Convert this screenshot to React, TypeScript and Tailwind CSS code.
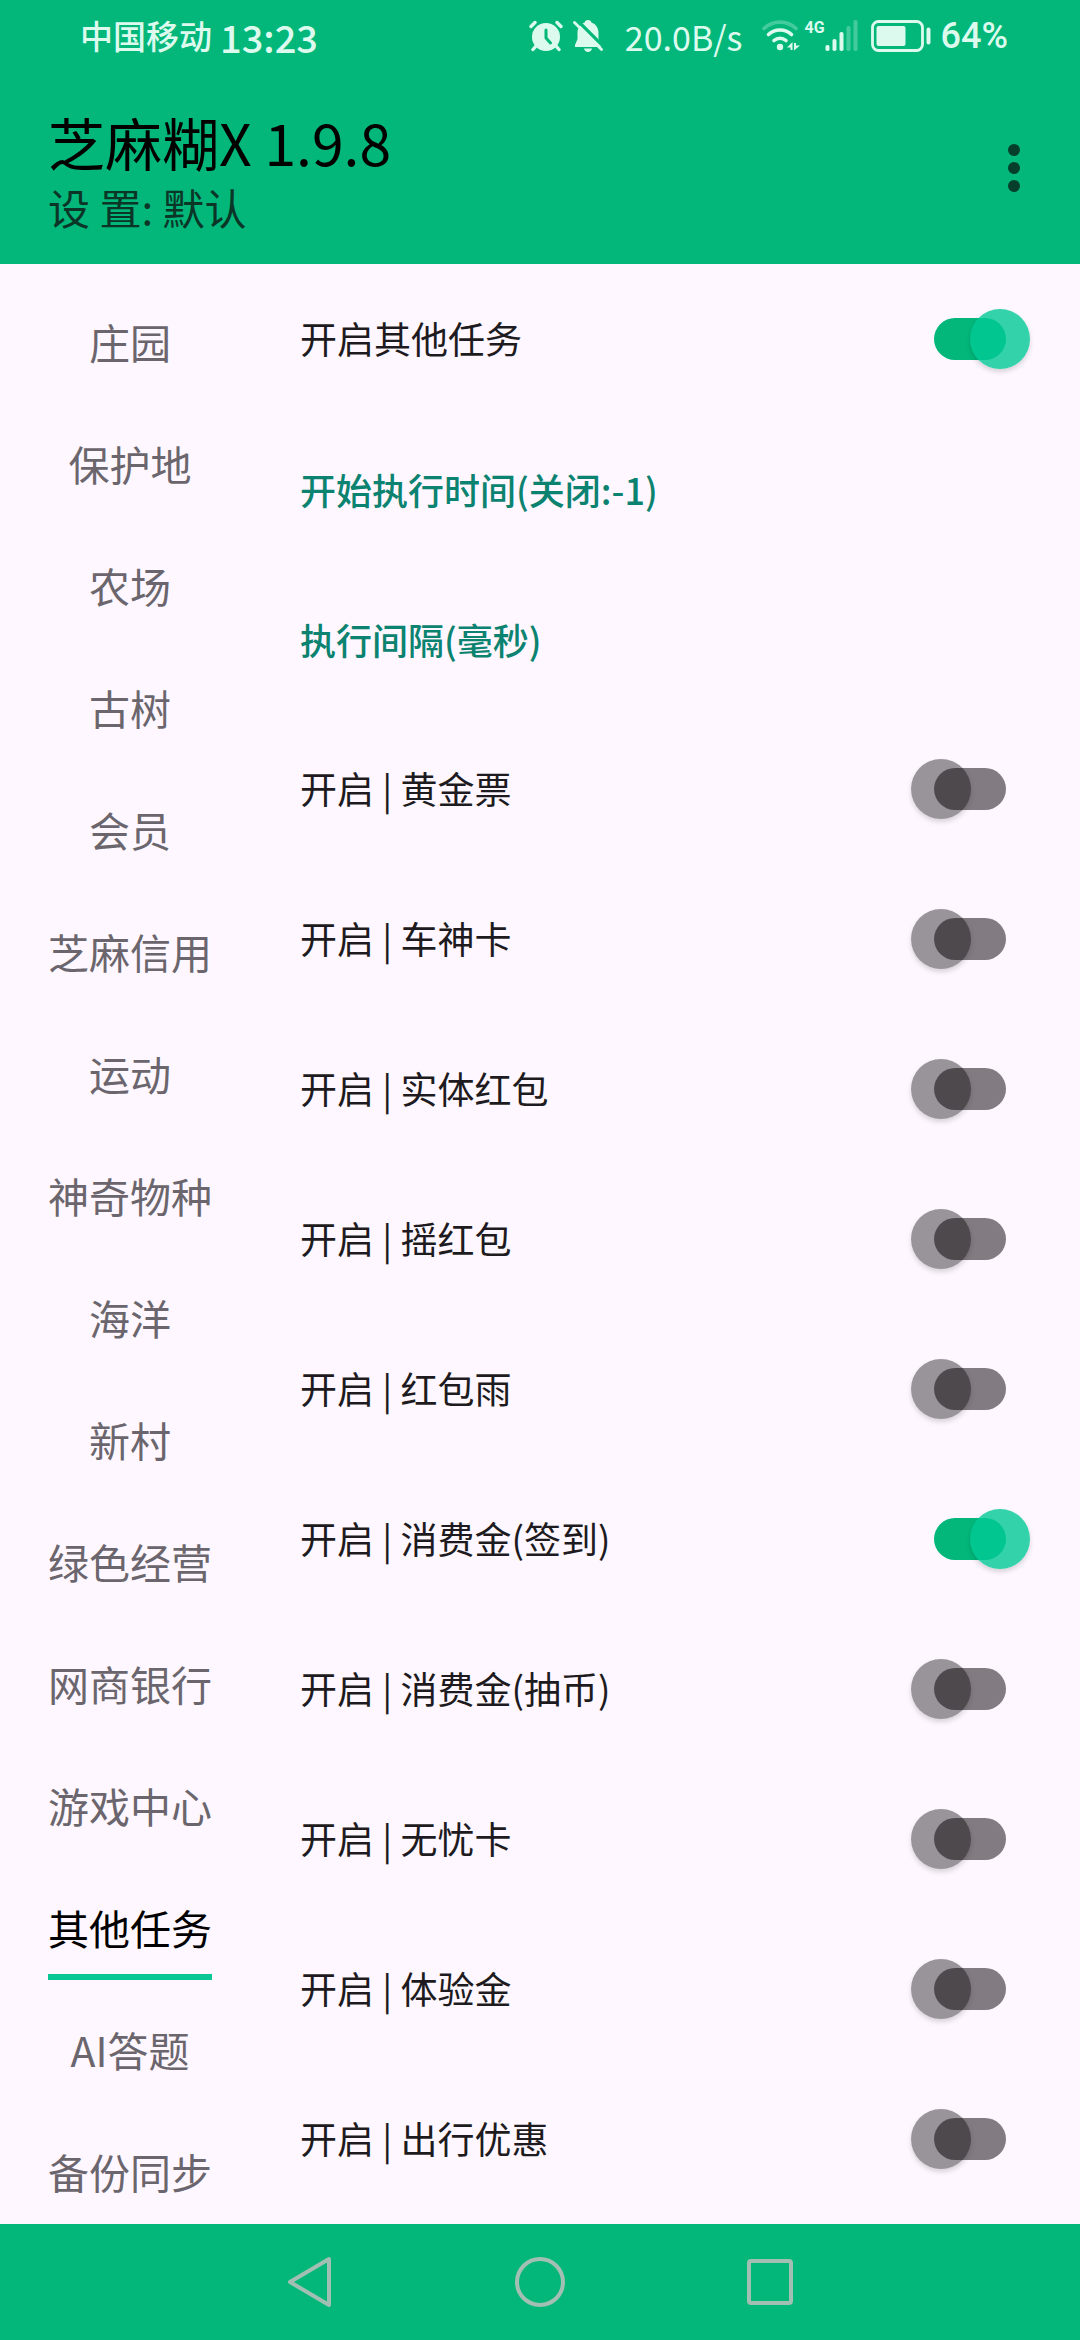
import { useState } from "react";

const tabs = [
  "庄园", "保护地", "农场", "古树", "会员", "芝麻信用", "运动", "神奇物种",
  "海洋", "新村", "绿色经营", "网商银行", "游戏中心", "其他任务", "AI答题", "备份同步",
];

type Row = { label: string; kind: "switch" | "action"; on?: boolean };

const rows: Row[] = [
  { label: "开启其他任务", kind: "switch", on: true },
  { label: "开始执行时间(关闭:-1)", kind: "action" },
  { label: "执行间隔(毫秒)", kind: "action" },
  { label: "开启 | 黄金票", kind: "switch" },
  { label: "开启 | 车神卡", kind: "switch" },
  { label: "开启 | 实体红包", kind: "switch" },
  { label: "开启 | 摇红包", kind: "switch" },
  { label: "开启 | 红包雨", kind: "switch" },
  { label: "开启 | 消费金(签到)", kind: "switch", on: true },
  { label: "开启 | 消费金(抽币)", kind: "switch" },
  { label: "开启 | 无忧卡", kind: "switch" },
  { label: "开启 | 体验金", kind: "switch" },
  { label: "开启 | 出行优惠", kind: "switch" },
];

function AlarmIcon() {
  return (
    <svg width="34" height="32" viewBox="0 0 34 32" fill="none" aria-hidden="true">
      <circle cx="17" cy="17" r="14" fill="currentColor" />
      <g stroke="currentColor" strokeWidth="3.4" strokeLinecap="round">
        <path d="M2 6.500L6 2.500M32 6.500L28 2.500M7 26L4 29.500M27 26L30 29.500" />
      </g>
      <path d="M17 10V18L21.500 23" stroke="#03b77a" strokeWidth="3" strokeLinecap="round" strokeLinejoin="round" />
    </svg>
  );
}

function BellOffIcon() {
  return (
    <svg width="30" height="32" viewBox="0 0 30 32" fill="none" aria-hidden="true">
      <path d="M15 0C17 0 18 1 18.400 2.500C23 4 25.500 8 25.500 13V19L28 25V27H2V25L4.500 19V13C4.500 8 7 4 11.600 2.500C12 1 13 0 15 0Z" fill="currentColor" />
      <path d="M11 28.500H19C18.500 30.500 17 32 15 32S11.500 30.500 11 28.500Z" fill="currentColor" />
      <path d="M3.500 -0.500L32 28" stroke="#03b77a" strokeWidth="3.200" />
      <path d="M1.500 2.500L28.500 29.500" stroke="currentColor" strokeWidth="2.800" strokeLinecap="round" />
    </svg>
  );
}

function WifiIcon() {
  return (
    <svg width="38" height="32" viewBox="0 0 38 32" fill="none" aria-hidden="true">
      <g stroke="currentColor" strokeWidth="3.600" strokeLinecap="round">
        <path d="M2 8.500C11 0 25 0 34 8.500" opacity="0.3" />
        <path d="M6.500 14.500C13 8.500 23 8.500 29.500 14.500" />
        <path d="M12 20.500C15.500 17.500 20.500 17.500 24 20.500" />
      </g>
      <circle cx="18" cy="27" r="3.200" fill="currentColor" />
      <path d="M30.500 22V30H28.500V27.500H25ZM32 30.500V23H34V25.500H38Z" fill="currentColor" />
    </svg>
  );
}

function SignalIcon() {
  return (
    <svg width="34" height="32" viewBox="0 0 34 32" fill="currentColor" aria-hidden="true">
      <rect x="0.500" y="25" width="4" height="6" rx="1.800" />
      <rect x="7.500" y="19" width="4" height="12" rx="1.800" />
      <rect x="14.500" y="12" width="4" height="19" rx="1.800" />
      <rect x="21.500" y="6" width="4" height="25" rx="1.800" opacity="0.3" />
      <rect x="28.500" y="0" width="4" height="31" rx="1.800" opacity="0.3" />
    </svg>
  );
}

function BatteryIcon() {
  return (
    <svg width="60" height="32" viewBox="0 0 60 32" fill="none" aria-hidden="true">
      <rect x="1.500" y="1.500" width="50" height="29" rx="6" stroke="currentColor" strokeWidth="2.800" />
      <rect x="5.500" y="6" width="29" height="20" rx="2" fill="currentColor" />
      <rect x="55.500" y="7.500" width="4" height="17" rx="2" fill="currentColor" />
    </svg>
  );
}

export default function App() {
  const [active, setActive] = useState("其他任务");

  return (
    <div className="flex h-screen flex-col bg-[#fef7ff] font-['Noto_Sans_CJK_SC',sans-serif] text-[#1d1b20]">
      <header className="shrink-0 bg-[#03b77a]">
        <div className="flex h-[72px] items-center pr-[72px] pl-20 text-[#dcfbee]">
          <span className="text-[33px] font-medium">中国移动</span>
          <span className="ml-2 text-[38px] font-medium">13:23</span>
          <div className="ml-auto flex items-center">
            <AlarmIcon />
            <span className="w-[10px]" />
            <BellOffIcon />
            <span className="ml-[22px] text-[34px]">20.0B/s</span>
            <span className="w-[20px]" />
            <WifiIcon />
            <span className="ml-1 h-8 font-[Roboto,sans-serif] text-[16px] leading-[16px] font-bold">4G</span>
            <SignalIcon />
            <span className="w-3" />
            <BatteryIcon />
            <span className="ml-[10px] font-[Roboto,sans-serif] text-[36px] font-medium">64%</span>
          </div>
        </div>
        <div className="flex h-[192px] items-center justify-between pr-[46px] pl-12">
          <div className="pt-2">
            <h1 className="text-[57px] leading-[70px] text-black">芝麻糊X 1.9.8</h1>
            <p className="text-[42px] leading-[62px] text-[#0b3527]">设 置: 默认</p>
          </div>
          <button type="button" aria-label="更多选项" className="flex w-10 flex-col items-center gap-[6px] py-4">
            <span className="size-3 rounded-full bg-[#053f2b]" />
            <span className="size-3 rounded-full bg-[#053f2b]" />
            <span className="size-3 rounded-full bg-[#053f2b]" />
          </button>
        </div>
      </header>

      <main className="flex min-h-0 flex-1">
        <nav className="flex w-[260px] shrink-0 flex-col overflow-y-auto pt-[20px] [scrollbar-width:none]">
          {tabs.map((tab) => (
            <button
              key={tab}
              type="button"
              onClick={() => setActive(tab)}
              aria-current={tab === active ? "page" : undefined}
              className="flex h-[122px] shrink-0 items-start justify-center text-[41px]"
            >
              <span
                className={
                  tab === active
                    ? "h-[110px] border-b-[6px] border-[#0bc795] leading-[114px] text-black"
                    : "h-[110px] leading-[114px] text-[#6b666d]"
                }
              >
                {tab}
              </span>
            </button>
          ))}
        </nav>
        <section className="min-w-0 flex-1 overflow-y-auto pr-[74px] pl-[40px] [scrollbar-width:none]">
          {rows.map((row) =>
            row.kind === "switch" ? (
              <label key={row.label} className="flex h-[150px] items-center justify-between text-[37px]">
                {row.label}
                <input
                  type="checkbox"
                  role="switch"
                  defaultChecked={row.on}
                  className="relative h-[42px] w-[72px] shrink-0 appearance-none rounded-full bg-[#827b81] before:absolute before:-top-[9px] before:-left-[23px] before:size-[60px] before:rounded-full before:bg-black/40 before:shadow-[0_3px_5px_rgba(0,0,0,0.15)] checked:bg-[#03b77a] checked:before:left-[36px] checked:before:bg-[#00c995]/80"
                />
              </label>
            ) : (
              <button
                key={row.label}
                type="button"
                className="flex h-[150px] w-full items-center text-[36px] font-medium text-[#0b8370]"
              >
                {row.label}
              </button>
            ),
          )}
        </section>
      </main>

      <footer className="flex h-[116px] shrink-0 items-center justify-center gap-[178px] bg-[#03b77a] text-[#a1bfb2]">
        <button type="button" aria-label="返回">
          <svg width="52" height="52" viewBox="0 0 52 52" fill="none" stroke="currentColor" strokeWidth="4" strokeLinejoin="round">
            <path d="M6 26L45 3V49Z" />
          </svg>
        </button>
        <button type="button" aria-label="主屏幕">
          <svg width="52" height="52" viewBox="0 0 52 52" fill="none" stroke="currentColor" strokeWidth="4">
            <circle cx="26" cy="26" r="23" />
          </svg>
        </button>
        <button type="button" aria-label="最近任务">
          <svg width="52" height="52" viewBox="0 0 52 52" fill="none" stroke="currentColor" strokeWidth="4">
            <rect x="5" y="5" width="42" height="42" rx="2" />
          </svg>
        </button>
      </footer>
    </div>
  );
}
